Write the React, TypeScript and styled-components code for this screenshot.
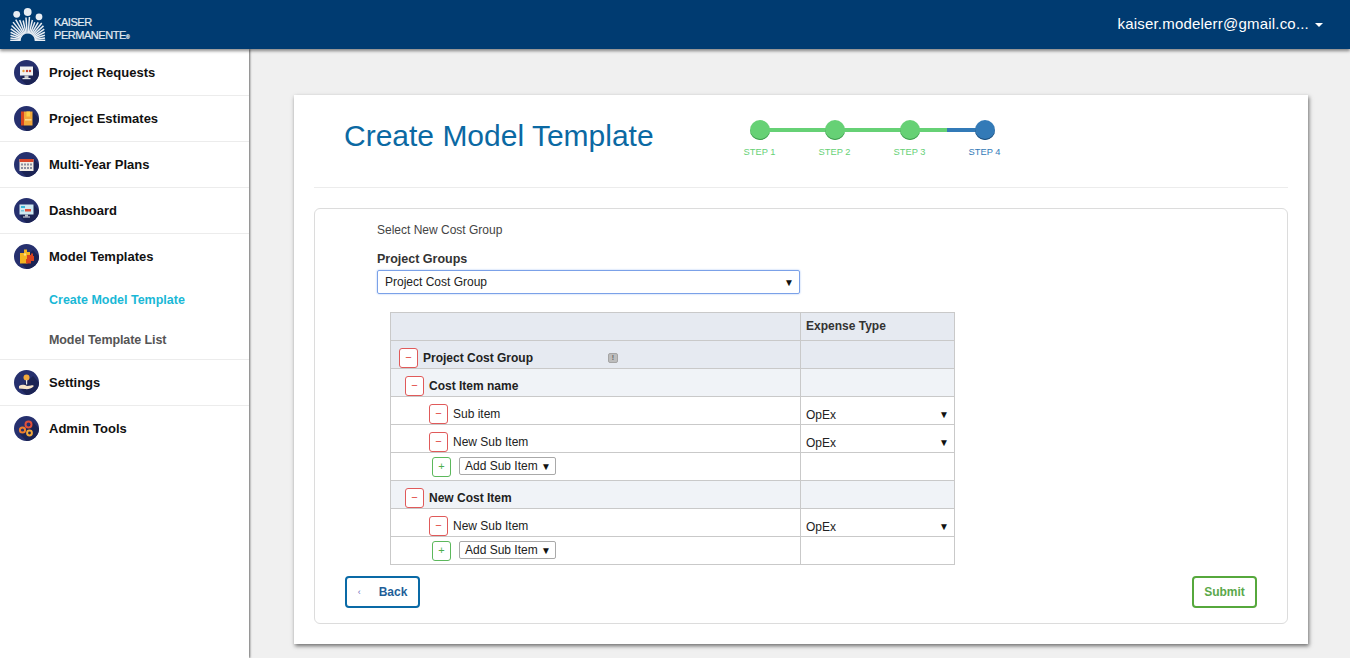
import React from "react"
import styled, { createGlobalStyle } from "styled-components"

const GlobalStyle = createGlobalStyle`
  html, body {
    margin: 0;
    padding: 0;
    height: 100%;
    overflow: hidden;
    background: #f0f0f0;
    font-family: "Liberation Sans", Arial, sans-serif;
  }
`

const Page = styled.div`
  width: 1350px;
  height: 658px;
  display: flex;
  flex-direction: column;
`

const Header = styled.header`
  height: 49px;
  flex: none;
  background: #003b71;
  box-shadow: 0 2px 3px rgba(0, 0, 0, 0.45);
  display: flex;
  align-items: center;
  justify-content: space-between;
  padding: 0 27px 0 10px;
  position: relative;
  z-index: 2;
`

const Logo = styled.div`
  display: flex;
  align-items: center;
  gap: 8px;
  color: #e4ebf2;
`

const LogoText = styled.div`
  font-size: 11px;
  line-height: 13px;
  letter-spacing: -0.45px;
  padding-top: 9px;
  -webkit-text-stroke: 0.2px #e4ebf2;

  sup {
    font-size: 5px;
    line-height: 0;
    vertical-align: baseline;
  }
`

const UserMenu = styled.div`
  display: flex;
  align-items: center;
  gap: 6px;
  color: #fff;
  font-size: 15px;
  letter-spacing: 0.2px;
  margin-top: -2px;
`

const Caret = styled.span`
  width: 0;
  height: 0;
  border-left: 4px solid transparent;
  border-right: 4px solid transparent;
  border-top: 4px solid #fff;
  margin-top: 2px;
`

const Body = styled.div`
  flex: 1;
  display: flex;
  min-height: 0;
`

const Sidebar = styled.nav`
  width: 249px;
  flex: none;
  padding-top: 1px;
  background: #fff;
  box-shadow: 1px 0 2px rgba(0, 0, 0, 0.55);
  position: relative;
  z-index: 1;
`

const NavItem = styled.div<{ $flat?: boolean }>`
  height: ${(props) => (props.$flat ? 45 : 46)}px;
  box-sizing: border-box;
  padding-left: 14px;
  display: flex;
  align-items: center;
  gap: 10px;
  font-size: 13px;
  font-weight: bold;
  color: #111;
  border-bottom: ${(props) => (props.$flat ? "none" : "1px solid #ececec")};
`

const NavGroup = styled.div`
  border-bottom: 1px solid #ececec;
`

const SubItem = styled.div<{ $active?: boolean }>`
  height: 40px;
  box-sizing: border-box;
  padding: 2px 0 0 49px;
  display: flex;
  align-items: center;
  font-size: 12.5px;
  font-weight: bold;
  letter-spacing: ${(props) => (props.$active ? "0" : "-0.1px")};
  color: ${(props) => (props.$active ? "#1ab8d6" : "#555")};
`

const Main = styled.main`
  flex: 1;
  padding: 46px 42px 14px 45px;
  min-width: 0;
`

const Card = styled.section`
  height: 549px;
  box-sizing: border-box;
  background: #fff;
  padding: 0 20px 20px;
  box-shadow: 1px 2px 4px rgba(0, 0, 0, 0.55);
  display: flex;
  flex-direction: column;
`

const CardHeader = styled.div`
  height: 93px;
  flex: none;
  box-sizing: border-box;
  border-bottom: 1px solid #ececec;
  display: flex;
  align-items: flex-start;
  padding-left: 30px;
`

const Title = styled.h1`
  margin: 23px 0 0;
  width: 378px;
  font-size: 30px;
  line-height: 36px;
  font-weight: normal;
  color: #0b69a3;
`

const Stepper = styled.ol`
  list-style: none;
  margin: 25px 0 0;
  padding: 0;
  display: flex;
`

const Step = styled.li<{ $color: string; $line?: string }>`
  width: 75px;
  display: flex;
  flex-direction: column;
  align-items: center;
  gap: 6px;
  font-size: 9.3px;
  line-height: 12px;
  color: ${(props) => props.$color};
  position: relative;

  &::before {
    content: "";
    display: ${(props) => (props.$line ? "block" : "none")};
    position: absolute;
    top: 8px;
    left: -50%;
    width: 100%;
    height: 4px;
    background: ${(props) => props.$line};
  }
`

const StepDot = styled.span<{ $color: string; $edge: string }>`
  width: 20px;
  height: 20px;
  border-radius: 50%;
  background: ${(props) => props.$color};
  box-shadow: inset 0 -1px 0 ${(props) => props.$edge};
  position: relative;
`

const Panel = styled.div`
  margin-top: 20px;
  flex: 1;
  border: 1px solid #dcdcdc;
  border-radius: 6px;
  padding: 14px 30px 0;
`

const FormBlock = styled.div`
  padding-left: 32px;
  width: 423px;
`

const Hint = styled.div`
  font-size: 12px;
  line-height: 14px;
  color: #444;
`

const FieldLabel = styled.div`
  margin-top: 15px;
  font-size: 12.5px;
  line-height: 14px;
  font-weight: bold;
  color: #333;
`

const GroupSelect = styled.div`
  margin-top: 4px;
  height: 24px;
  box-sizing: border-box;
  border: 1px solid #7ba1e8;
  box-shadow: 0 0 2px #9fbdf2;
  border-radius: 2px;
  padding: 0 5px 0 7px;
  display: flex;
  align-items: center;
  justify-content: space-between;
  font-size: 12px;
  color: #222;
`

const Arrow = styled.span`
  font-size: 10px;
  color: #111;
`

const CostTable = styled.table`
  margin: 18px 0 0 45px;
  width: 565px;
  border-collapse: collapse;
  table-layout: fixed;
  font-size: 12px;
  color: #222;
`

const Row = styled.tr<{ $tone?: "group" | "item" }>`
  height: 28px;
  background: ${(props) =>
    props.$tone === "group" ? "#e6eaf1" : props.$tone === "item" ? "#f0f3f7" : "#fff"};
`

const Cell = styled.td`
  border: 1px solid #c9c9c9;
  padding: 0;
  vertical-align: middle;
`

const HeadCell = styled.th`
  border: 1px solid #c9c9c9;
  padding: 0 0 2px 5px;
  text-align: left;
  font-size: 12px;
  color: #333;
`

const RowLabel = styled.div<{ $indent: number; $bold?: boolean; $flush?: boolean }>`
  display: flex;
  align-items: center;
  gap: 5px;
  padding-left: ${(props) => props.$indent}px;
  padding-top: ${(props) => (props.$flush ? 0 : 6)}px;
  font-weight: ${(props) => (props.$bold ? "bold" : "normal")};
`

const ToggleButton = styled.span<{ $add?: boolean }>`
  width: 19px;
  height: 20px;
  box-sizing: border-box;
  flex: none;
  border: 1px solid ${(props) => (props.$add ? "#5cb85c" : "#e05a5a")};
  border-radius: 3px;
  background: #fff;
  color: ${(props) => (props.$add ? "#4cae4c" : "#e0403a")};
  display: flex;
  align-items: center;
  justify-content: center;
  font-size: 11px;
  font-weight: normal;
  line-height: 1;
`

const InfoBadge = styled.span`
  width: 10px;
  height: 10px;
  box-sizing: border-box;
  margin-left: 70px;
  background: #bdbdbd;
  border: 1px solid #a5a5a5;
  border-radius: 2px;
  display: flex;
  align-items: center;
  justify-content: center;
  color: #666;
  font-size: 7px;
  line-height: 1;
`

const TypeSelect = styled.div`
  display: flex;
  align-items: center;
  justify-content: space-between;
  padding: 8px 5px 0 5px;
  color: #222;
`

const AddSelect = styled.div`
  margin: -1px 0 0 3px;
  width: 97px;
  height: 18px;
  box-sizing: border-box;
  border: 1px solid #a9a9a9;
  border-radius: 2px;
  display: flex;
  align-items: center;
  justify-content: space-between;
  padding: 0 4px 0 5px;
`

const Footer = styled.div`
  margin-top: 11px;
  display: flex;
  justify-content: space-between;
`

const ActionButton = styled.button<{ $color: string; $text: string; $width: number }>`
  width: ${(props) => props.$width}px;
  height: 32px;
  background: #fff;
  border: 2px solid ${(props) => props.$color};
  border-radius: 4px;
  color: ${(props) => props.$text};
  font-family: inherit;
  font-size: 12px;
  font-weight: bold;
  display: flex;
  align-items: center;
  justify-content: center;
  gap: 18px;
  padding: 0;
`

const BackChevron = styled.span`
  font-size: 9px;
  font-weight: normal;
  color: #6a6fc0;
`

const IconDisc = ({ children }: { children: React.ReactNode }) => (
  <svg width="25" height="25" viewBox="0 0 25 25" style={{ flex: "none" }}>
    <circle cx="12.5" cy="12.5" r="12.5" fill="#26306e" />
    <path d="M19 6 L25 12.5 A12.5 12.5 0 0 1 12.5 25 L6 18 Z" fill="#1b2354" />
    {children}
  </svg>
)

// outer reach of each ray of the fan, left to right: three shoulders under the heads
const rayReach = [17.5, 17.5, 18, 19, 20.5, 22, 23.5, 24, 22, 20.5, 23, 23.5, 21, 19.5, 21, 22.5, 21.5, 20, 19, 18, 17.5, 17.5]

const KaiserMark = () => (
  <svg width="36" height="33" viewBox="0 0 36 33">
    <circle cx="6.7" cy="6.3" r="3.4" fill="#e9eef4" />
    <circle cx="17.7" cy="4" r="3.9" fill="#e9eef4" />
    <circle cx="29" cy="8.8" r="3.4" fill="#e9eef4" />
    {rayReach.map((reach, index) => {
      const angle = Math.PI - (index / (rayReach.length - 1)) * Math.PI
      const cos = Math.cos(angle)
      const sin = Math.sin(angle)
      return (
        <line
          key={index}
          x1={17.7 + cos * 7}
          y1={32.5 - sin * 7}
          x2={17.7 + cos * reach}
          y2={32.5 - sin * reach}
          stroke="#e9eef4"
          strokeWidth={index === 0 || index === rayReach.length - 1 ? 1.8 : 1.5}
        />
      )
    })}
  </svg>
)

const navIcons = {
  requests: (
    <IconDisc>
      <rect x="6" y="6.5" width="13" height="9" fill="#f2f2f2" />
      <rect x="10.5" y="15.5" width="4" height="2.5" fill="#c9c9c9" />
      <rect x="8.5" y="18" width="8" height="1.2" fill="#e6e6e6" />
      <circle cx="9.5" cy="11" r="1.2" fill="#e8a33d" />
      <circle cx="13" cy="11" r="1.2" fill="#c8402f" />
      <circle cx="16" cy="11" r="1.2" fill="#c8402f" />
    </IconDisc>
  ),
  estimates: (
    <IconDisc>
      <rect x="7" y="5.5" width="3" height="14" fill="#d8471f" />
      <rect x="10" y="5.5" width="8.5" height="14" fill="#f2a93b" />
      <rect x="12.5" y="5.5" width="3.5" height="5" fill="#fbd14b" />
      <rect x="11" y="13" width="6.5" height="1.6" fill="#fbd98a" />
    </IconDisc>
  ),
  plans: (
    <IconDisc>
      <rect x="5.5" y="7" width="14" height="12" fill="#f1ece4" />
      <rect x="5.5" y="7" width="14" height="3" fill="#d9482b" />
      <g fill="#8a8f9e">
        <rect x="7" y="11.5" width="2" height="2" />
        <rect x="10" y="11.5" width="2" height="2" />
        <rect x="13" y="11.5" width="2" height="2" />
        <rect x="16" y="11.5" width="2" height="2" />
        <rect x="7" y="15" width="2" height="2" />
        <rect x="10" y="15" width="2" height="2" />
        <rect x="13" y="15" width="2" height="2" />
        <rect x="16" y="15" width="2" height="2" />
      </g>
    </IconDisc>
  ),
  dashboard: (
    <IconDisc>
      <rect x="5.5" y="6.5" width="14" height="10" fill="#cfe9f2" />
      <rect x="7" y="8" width="4" height="2" fill="#38b6d8" />
      <rect x="11" y="11" width="6" height="2.5" fill="#e2503a" />
      <rect x="7" y="12" width="3" height="1.5" fill="#7fc6dc" />
      <rect x="11" y="16.5" width="3" height="2" fill="#bfc5cf" />
      <rect x="9" y="18.5" width="7" height="1" fill="#e4e6ea" />
    </IconDisc>
  ),
  templates: (
    <IconDisc>
      <path d="M6 9 H10 V5.5 H13 V8 H16 V13 H13.5 V19.5 H6 Z" fill="#f4b41f" />
      <path d="M13 11 H17 V9.5 H19 V12 H20 V17 H17 V19.5 H12 V15 H13 Z" fill="#d8431f" />
      <circle cx="11" cy="10.5" r="1.2" fill="#fbe08a" />
    </IconDisc>
  ),
  settings: (
    <IconDisc>
      <circle cx="12.5" cy="7.5" r="3" fill="#f2a93b" />
      <rect x="12" y="10" width="1.2" height="4.5" fill="#e8e8e8" />
      <path d="M5 16 C8 14 11 15 13 16 L17 15.5 C19 15 20 15.6 19.5 16.5 C17 18.6 14 19.5 11 19 L5 18.5 Z" fill="#f6e3c8" />
    </IconDisc>
  ),
  admin: (
    <IconDisc>
      <g fill="none" strokeWidth="2">
        <circle cx="14.5" cy="8.5" r="3" stroke="#e2503a" />
        <circle cx="8.5" cy="14" r="2.6" stroke="#f07f2c" />
        <circle cx="15.5" cy="17" r="2.4" stroke="#f2a93b" />
      </g>
    </IconDisc>
  ),
}

const costRows = [
  { kind: "item", label: "Cost Item name" },
  { kind: "sub", label: "Sub item" },
  { kind: "sub", label: "New Sub Item" },
  { kind: "add" },
  { kind: "item", label: "New Cost Item" },
  { kind: "sub", label: "New Sub Item" },
  { kind: "add" },
]

const steps = [
  { label: "STEP 1", color: "#66d175", edge: "#3f9a4e" },
  { label: "STEP 2", color: "#66d175", edge: "#3f9a4e", line: "#66d175" },
  { label: "STEP 3", color: "#66d175", edge: "#3f9a4e", line: "#66d175" },
  {
    label: "STEP 4",
    color: "#337ab7",
    edge: "#1f4d78",
    line: "linear-gradient(to right, #66d175 0 37px, #337ab7 37px)",
  },
]

export default function App() {
  return (
    <Page>
      <GlobalStyle />
      <Header>
        <Logo>
          <KaiserMark />
          <LogoText>
            KAISER
            <br />
            PERMANENTE<sup>®</sup>
          </LogoText>
        </Logo>
        <UserMenu>
          kaiser.modelerr@gmail.co...
          <Caret />
        </UserMenu>
      </Header>
      <Body>
        <Sidebar>
          <NavItem>{navIcons.requests}Project Requests</NavItem>
          <NavItem>{navIcons.estimates}Project Estimates</NavItem>
          <NavItem>{navIcons.plans}Multi-Year Plans</NavItem>
          <NavItem>{navIcons.dashboard}Dashboard</NavItem>
          <NavGroup>
            <NavItem $flat>{navIcons.templates}Model Templates</NavItem>
            <SubItem $active>Create Model Template</SubItem>
            <SubItem>Model Template List</SubItem>
          </NavGroup>
          <NavItem>{navIcons.settings}Settings</NavItem>
          <NavItem $flat>{navIcons.admin}Admin Tools</NavItem>
        </Sidebar>
        <Main>
          <Card>
            <CardHeader>
              <Title>Create Model Template</Title>
              <Stepper>
                {steps.map((step) => (
                  <Step key={step.label} $color={step.color} $line={step.line}>
                    <StepDot $color={step.color} $edge={step.edge} />
                    {step.label}
                  </Step>
                ))}
              </Stepper>
            </CardHeader>
            <Panel>
              <FormBlock>
                <Hint>Select New Cost Group</Hint>
                <FieldLabel>Project Groups</FieldLabel>
                <GroupSelect>
                  Project Cost Group
                  <Arrow>▼</Arrow>
                </GroupSelect>
              </FormBlock>
              <CostTable>
                <colgroup>
                  <col style={{ width: 410 }} />
                  <col />
                </colgroup>
                <tbody>
                  <Row $tone="group">
                    <HeadCell />
                    <HeadCell>Expense Type</HeadCell>
                  </Row>
                  <Row $tone="group">
                    <Cell>
                      <RowLabel $indent={8} $bold>
                        <ToggleButton>−</ToggleButton>
                        Project Cost Group
                        <InfoBadge>!</InfoBadge>
                      </RowLabel>
                    </Cell>
                    <Cell />
                  </Row>
                  {costRows.map((row, index) => {
                    if (row.kind === "item") {
                      return (
                        <Row key={index} $tone="item">
                          <Cell>
                            <RowLabel $indent={14} $bold>
                              <ToggleButton>−</ToggleButton>
                              {row.label}
                            </RowLabel>
                          </Cell>
                          <Cell />
                        </Row>
                      )
                    }
                    if (row.kind === "sub") {
                      return (
                        <Row key={index}>
                          <Cell>
                            <RowLabel $indent={38}>
                              <ToggleButton>−</ToggleButton>
                              {row.label}
                            </RowLabel>
                          </Cell>
                          <Cell>
                            <TypeSelect>
                              OpEx
                              <Arrow>▼</Arrow>
                            </TypeSelect>
                          </Cell>
                        </Row>
                      )
                    }
                    return (
                      <Row key={index}>
                        <Cell>
                          <RowLabel $indent={41} $flush>
                            <ToggleButton $add>+</ToggleButton>
                            <AddSelect>
                              Add Sub Item
                              <Arrow>▼</Arrow>
                            </AddSelect>
                          </RowLabel>
                        </Cell>
                        <Cell />
                      </Row>
                    )
                  })}
                </tbody>
              </CostTable>
              <Footer>
                <ActionButton $color="#0a6aa6" $text="#1f5f99" $width={75}>
                  <BackChevron>‹</BackChevron>
                  Back
                </ActionButton>
                <ActionButton $color="#56a83c" $text="#5aa84a" $width={65}>
                  Submit
                </ActionButton>
              </Footer>
            </Panel>
          </Card>
        </Main>
      </Body>
    </Page>
  )
}
